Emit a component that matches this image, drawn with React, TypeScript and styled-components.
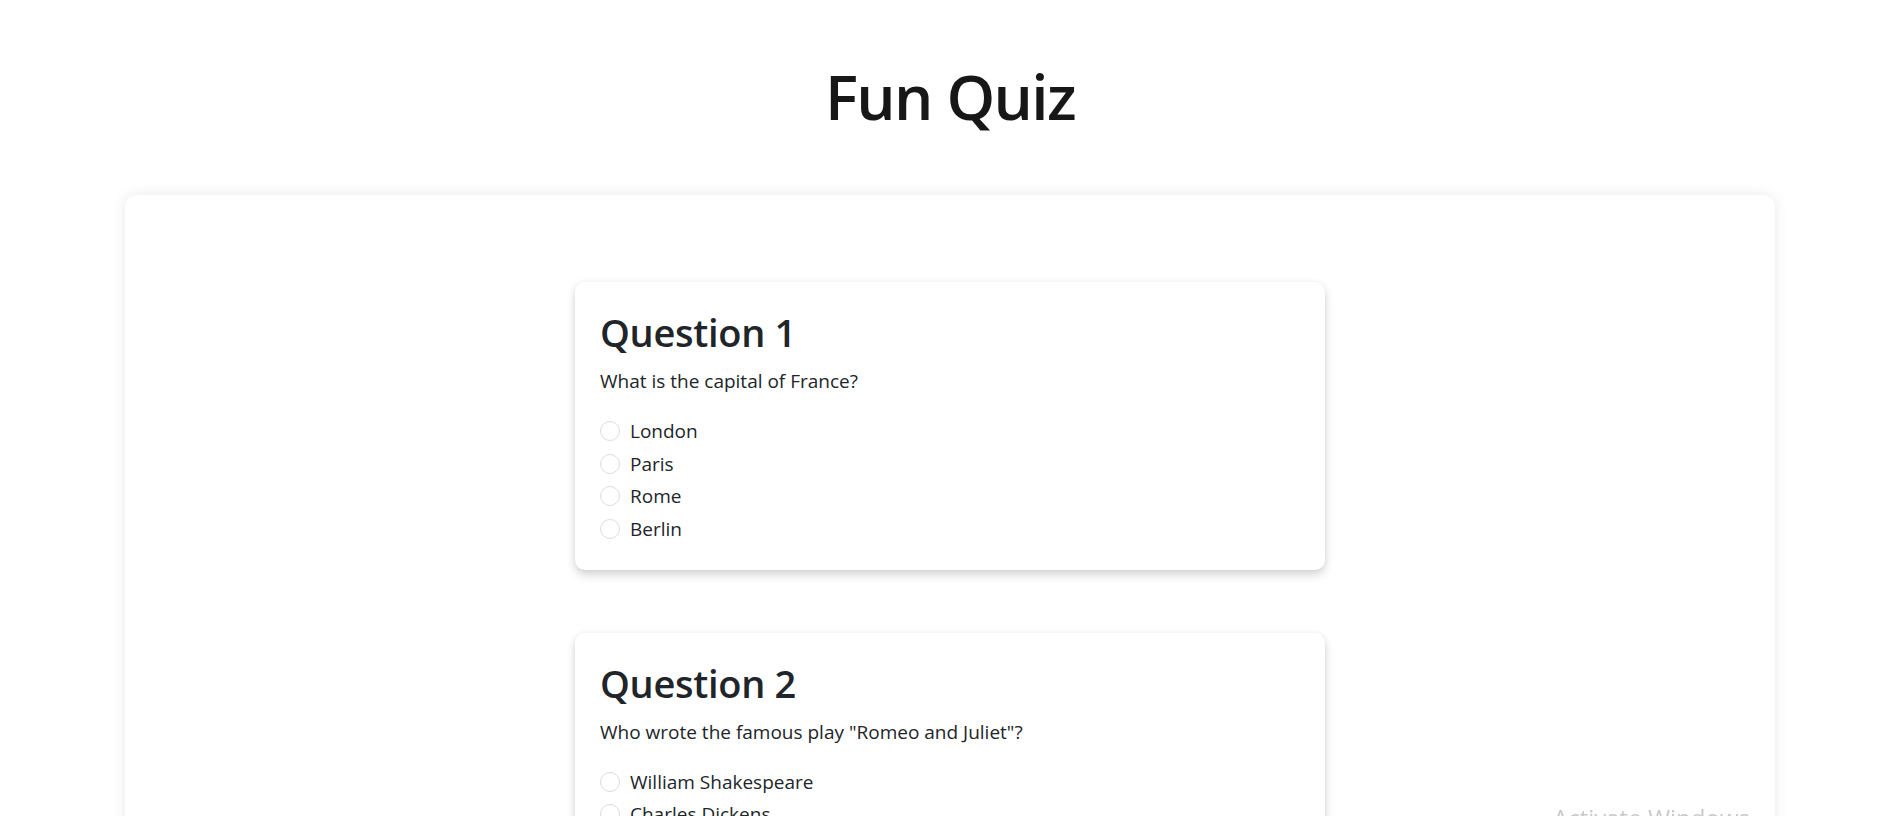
import React from "react";
import styled, { createGlobalStyle } from "styled-components";

const GlobalStyle = createGlobalStyle`
  html, body {
    margin: 0;
    padding: 0;
    background: #ffffff;
    scrollbar-width: none;
  }
  html::-webkit-scrollbar, body::-webkit-scrollbar {
    width: 0;
    height: 0;
    display: none;
  }
  body {
    font-family: "Open Sans", "Noto Sans", sans-serif;
    color: #212529;
  }
  * { box-sizing: border-box; }
`;

const Page = styled.div`
  display: flex;
  flex-direction: column;
  align-items: stretch;
  padding: 0 125px 60px;
`;

const Title = styled.h1`
  margin: 58px 0 61px;
  text-align: center;
  font-size: 62px;
  line-height: 76px;
  font-weight: 600;
  color: #171717;
  letter-spacing: -1.6px;
`;

const Board = styled.main`
  background: #ffffff;
  border-radius: 12px;
  box-shadow: 0 0 14px rgba(0, 0, 0, 0.09);
  padding: 87px 0 64px;
  display: flex;
  flex-direction: column;
  align-items: center;
  gap: 63px;
`;

const Card = styled.section`
  width: 750px;
  background: #ffffff;
  border-radius: 10px;
  box-shadow: 0 5px 10px rgba(0, 0, 0, 0.16), 0 0 6px rgba(0, 0, 0, 0.05);
  padding: 25px 25px 26px;
`;

const Heading = styled.h2`
  margin: 2px 0 11px;
  font-size: 38px;
  line-height: 46px;
  font-weight: 600;
  color: #212529;
  letter-spacing: -0.3px;
`;

const Prompt = styled.p`
  margin: 0 0 20px;
  font-size: 19px;
  line-height: 30px;
  color: #212529;
`;

const Options = styled.div`
  display: flex;
  flex-direction: column;
  gap: 2.6px;
`;

const Option = styled.label`
  display: flex;
  align-items: center;
  gap: 10px;
  font-size: 19px;
  line-height: 30px;
  color: #212529;
  cursor: pointer;
`;

const Radio = styled.input.attrs({ type: "radio" })`
  appearance: none;
  -webkit-appearance: none;
  margin: 0;
  width: 20px;
  height: 20px;
  flex: 0 0 20px;
  border-radius: 50%;
  border: 1px solid #dcdcdc;
  background: #ffffff;
`;

const Watermark = styled.div`
  position: fixed;
  left: 1553px;
  top: 803px;
  font-family: "Open Sans", sans-serif;
  font-size: 24px;
  line-height: 30px;
  color: #c9c9c9;
  pointer-events: none;
  white-space: nowrap;
`;

const questions = [
  {
    title: "Question 1",
    text: "What is the capital of France?",
    options: ["London", "Paris", "Rome", "Berlin"],
  },
  {
    title: "Question 2",
    text: 'Who wrote the famous play "Romeo and Juliet"?',
    options: ["William Shakespeare", "Charles Dickens", "Jane Austen", "Mark Twain"],
  },
  {
    title: "Question 3",
    text: "What is the largest planet in our solar system?",
    options: ["Earth", "Mars", "Jupiter", "Saturn"],
  },
];

export default function App() {
  return (
    <>
      <GlobalStyle />
      <Page>
        <Title>Fun Quiz</Title>
        <Board>
          {questions.map((q, qi) => (
            <Card key={q.title}>
              <Heading>{q.title}</Heading>
              <Prompt>{q.text}</Prompt>
              <Options>
                {q.options.map((o) => (
                  <Option key={o}>
                    <Radio name={`q${qi}`} value={o} />
                    {o}
                  </Option>
                ))}
              </Options>
            </Card>
          ))}
        </Board>
      </Page>
      <Watermark>Activate Windows</Watermark>
    </>
  );
}
